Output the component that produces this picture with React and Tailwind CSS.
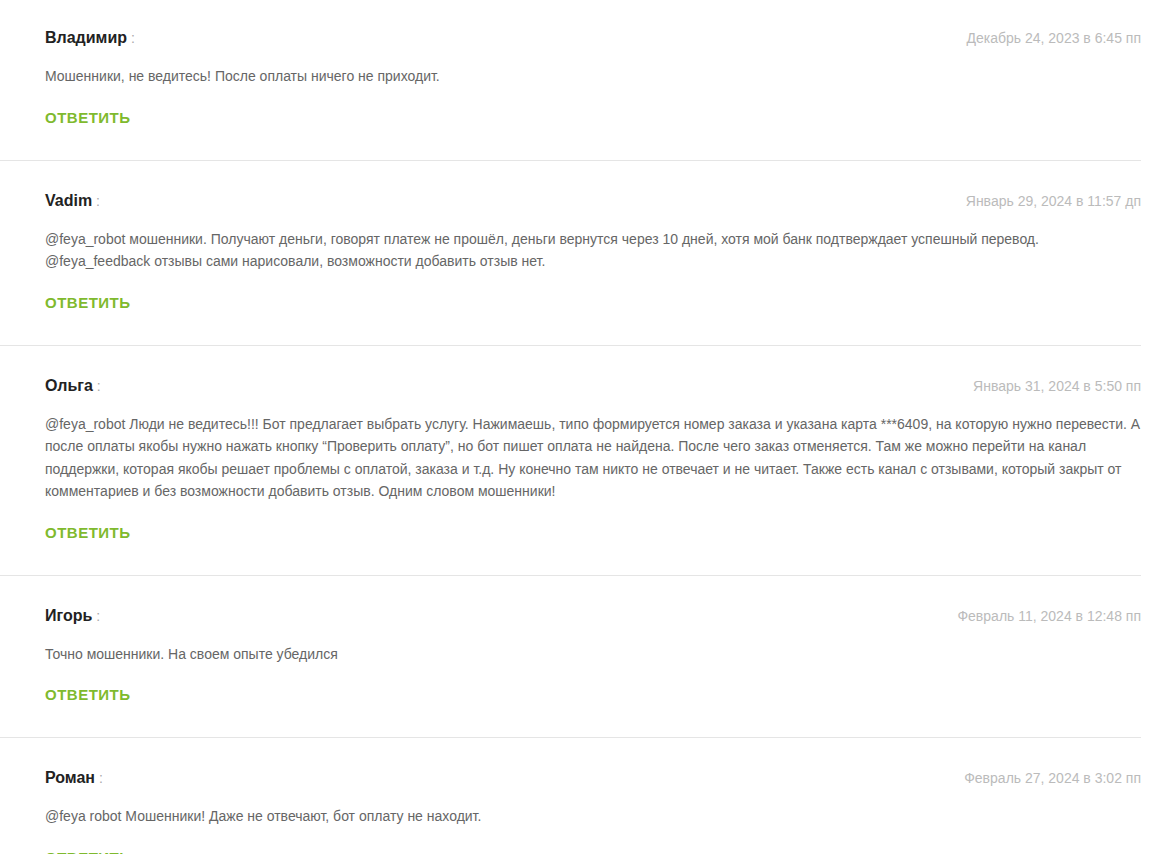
const comments = [
  {
    name: 'Владимир',
    date: 'Декабрь 24, 2023 в 6:45 пп',
    text: ['Мошенники, не ведитесь! После оплаты ничего не приходит.'],
  },
  {
    name: 'Vadim',
    date: 'Январь 29, 2024 в 11:57 дп',
    text: [
      '@feya_robot мошенники. Получают деньги, говорят платеж не прошёл, деньги вернутся через 10 дней, хотя мой банк подтверждает успешный перевод.',
      '@feya_feedback отзывы сами нарисовали, возможности добавить отзыв нет.',
    ],
  },
  {
    name: 'Ольга',
    date: 'Январь 31, 2024 в 5:50 пп',
    text: [
      '@feya_robot Люди не ведитесь!!! Бот предлагает выбрать услугу. Нажимаешь, типо формируется номер заказа и указана карта ***6409, на которую нужно перевести. А после оплаты якобы нужно нажать кнопку “Проверить оплату”, но бот пишет оплата не найдена. После чего заказ отменяется. Там же можно перейти на канал поддержки, которая якобы решает проблемы с оплатой, заказа и т.д. Ну конечно там никто не отвечает и не читает. Также есть канал с отзывами, который закрыт от комментариев и без возможности добавить отзыв. Одним словом мошенники!',
    ],
  },
  {
    name: 'Игорь',
    date: 'Февраль 11, 2024 в 12:48 пп',
    text: ['Точно мошенники. На своем опыте убедился'],
  },
  {
    name: 'Роман',
    date: 'Февраль 27, 2024 в 3:02 пп',
    text: ['@feya robot Мошенники! Даже не отвечают, бот оплату не находит.'],
  },
];

const Comment = ({ c, first }) => (
  <div className={`pl-[45px] pb-[30px] border-b border-[#e5e5e5] ${first ? 'pt-[28px]' : 'pt-[30px]'}`}>
    <div className="flex items-baseline justify-between">
      <div className="text-[16px] leading-[20px]">
        <span className="font-bold text-[#222]">{c.name}</span>
        <span className="text-[#aaa] text-[14px]"> :</span>
      </div>
      <div className="text-[14px] text-[#bbbbbb]">{c.date}</div>
    </div>
    <div className="mt-[16px] text-[14px] leading-[22.5px] text-[#666]">
      {c.text.map((t, i) => (
        <p key={i}>{t}</p>
      ))}
    </div>
    <div className="mt-[18px]">
      <a href="#" className="text-[15px] leading-[20px] font-bold uppercase tracking-[0.5px] text-[#7fba2e]">
        Ответить
      </a>
    </div>
  </div>
);

export default function App() {
  return (
    <div className="min-h-screen bg-white font-['Liberation_Sans',Arial,sans-serif]">
      <div className="w-[1141px]">
        {comments.map((c, i) => (
          <Comment key={i} c={c} first={i === 0} />
        ))}
      </div>
    </div>
  );
}
